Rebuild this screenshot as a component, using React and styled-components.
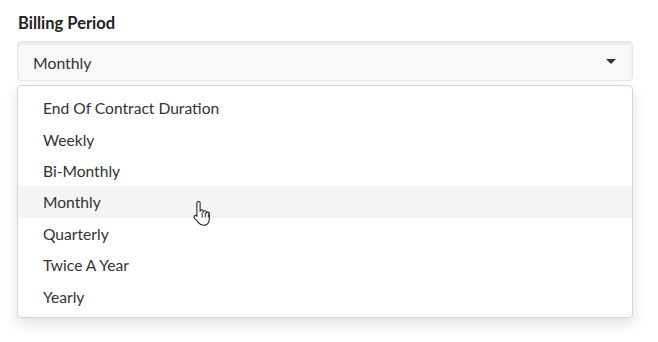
import React, { useState } from "react";
import styled, { createGlobalStyle } from "styled-components";

const Global = createGlobalStyle`
  html, body {
    margin: 0;
    background: #fff;
    font-family: Lato, "Noto Sans", sans-serif;
    color: #333;
  }
`;

const Field = styled.div`
  position: relative;
  box-sizing: border-box;
  height: 342px;
  padding: 14px 25px 0 17px;
`;

const Label = styled.div`
  font-size: 16.5px;
  font-weight: 700;
  color: #222;
  line-height: 18px;
  margin-left: 1px;
  margin-bottom: 9px;
`;

const Select = styled.div`
  display: flex;
  align-items: center;
  justify-content: space-between;
  height: 40px;
  box-sizing: border-box;
  padding: 2px 16px 0 15px;
  background: #f8f8f8;
  border: 1px solid #e6e6e6;
  border-radius: 4px;
  box-shadow: inset 0 2px 3px rgba(0, 0, 0, 0.07);
  font-size: 15.8px;
`;

const Caret = styled.span`
  width: 0;
  height: 0;
  border-left: 5px solid transparent;
  border-right: 5px solid transparent;
  border-top: 5px solid #333;
  margin-top: -1px;
`;

const Menu = styled.ul`
  margin: 4px 0 0;
  padding: 6px 0 5px;
  list-style: none;
  background: #fff;
  border: 1px solid #d4d4d4;
  border-radius: 4px;
  box-shadow: 0 6px 14px rgba(0, 0, 0, 0.12);
`;

const Option = styled.li`
  box-sizing: border-box;
  height: 31.4px;
  display: flex;
  align-items: center;
  padding: 1px 0 0 25px;
  font-size: 15.6px;
  color: #333;
  background: ${(p) => (p.$active ? "#f4f4f4" : "transparent")};
`;

const Pointer = styled.svg`
  position: absolute;
  left: 193px;
  top: 200px;
`;

const options = [
  "End Of Contract Duration",
  "Weekly",
  "Bi-Monthly",
  "Monthly",
  "Quarterly",
  "Twice A Year",
  "Yearly",
];

export default function App() {
  const [value] = useState("Monthly");
  return (
    <>
      <Global />
      <Field>
        <Label>Billing Period</Label>
        <Select>
          <span>{value}</span>
          <Caret />
        </Select>
        <Menu>
          {options.map((o) => (
            <Option key={o} $active={o === value}>
              {o}
            </Option>
          ))}
        </Menu>
        <Pointer width="20" height="27" viewBox="0 0 20 27">
          <path
            d="M5.5 1.5c1 0 1.6.7 1.6 1.6v8.2c.2-1 .8-1.5 1.6-1.5.9 0 1.5.7 1.5 1.6v.7c.2-.8.8-1.3 1.6-1.3.9 0 1.5.7 1.5 1.6v.8c.2-.7.8-1.1 1.5-1.1.9 0 1.5.7 1.5 1.6v5.4c0 3.6-2.4 6.2-5.8 6.2-2.5 0-3.8-1-5.2-2.9L1.4 18c-.6-.8-.4-1.7.3-2.2.7-.5 1.6-.3 2.1.3l.1.1V3.1c0-.9.7-1.6 1.6-1.6z"
            fill="#fff"
            stroke="#222"
            strokeWidth="1.1"
            strokeLinejoin="round"
          />
          <path d="M9.2 13v4M12.3 13.5v3.5M15.3 14v3" stroke="#222" strokeWidth="1" strokeLinecap="round" />
        </Pointer>
      </Field>
    </>
  );
}
